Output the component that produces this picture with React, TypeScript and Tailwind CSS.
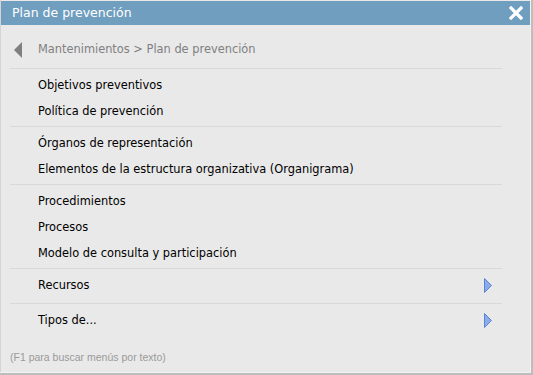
import React from "react";

const Sep = () => <div className="mt-[2px] mb-[3px] h-px bg-[#d9d9d9] mx-[10px] w-[492px]" />;

const Item = ({ label, arrow, extra }: { label: string; arrow?: boolean; extra?: boolean }) => (
  <div className={`h-[26px] flex items-center pl-[38px] pr-[10px] w-[502px] text-[#000] justify-between ${extra ? "mb-[3px]" : ""}`}>
    <span className="pt-[2px]">{label}</span>
    {arrow && (
      <svg width="8" height="15" viewBox="0 0 8 15">
        <polygon points="0.5,0.5 7.5,7.5 0.5,14.5" fill="#8aaceb" stroke="#5b84d6" strokeWidth="1" />
      </svg>
    )}
  </div>
);

export default function App() {
  return (
    <div className="w-[533px] h-[375px] bg-[#e9e9e9] flex flex-col relative overflow-hidden" style={{ fontFamily: "'DejaVu Sans', Verdana, sans-serif" }}>
      <div className="absolute left-0 top-0 w-px h-full bg-[#d4d4d4]" />
      <div className="absolute right-0 top-0 w-[2px] h-full bg-[#bdbdbd]" />
      <div className="absolute right-[2px] top-0 w-px h-full bg-[#f2f2f2]" />
      <div className="absolute left-0 bottom-0 h-[2px] w-full bg-[#bdbdbd]" />
      <div className="absolute left-0 bottom-[2px] h-px w-[530px] bg-[#f2f2f2]" />
      <div className="mt-px ml-px w-[529px] h-[24px] bg-[#6f9ebf] flex items-center justify-between pl-[11px] pr-[7px]">
        <span className="text-white text-[12.5px]">Plan de prevención</span>
        <svg width="14" height="14" viewBox="0 0 14 14">
          <path d="M2 2 L12 12 M12 2 L2 12" stroke="white" strokeWidth="3.2" strokeLinecap="square" />
        </svg>
      </div>
      <div className="text-[11.4px] flex flex-col">
        <div className="h-[32px] mt-[9px] flex items-center">
          <svg width="9" height="16" viewBox="0 0 9 16" className="ml-[14px] mr-[15px]">
            <polygon points="8,0 8,16 0,8" fill="#7f7f7f" />
          </svg>
          <span className="text-[#808080]">Mantenimientos &gt; Plan de prevención</span>
        </div>
        <Sep />
        <Item label="Objetivos preventivos" />
        <Item label="Política de prevención" />
        <Sep />
        <Item label="Órganos de representación" />
        <Item label="Elementos de la estructura organizativa (Organigrama)" />
        <Sep />
        <Item label="Procedimientos" />
        <Item label="Procesos" />
        <Item label="Modelo de consulta y participación" />
        <Sep />
        <Item label="Recursos" arrow extra />
        <Sep />
        <Item label="Tipos de..." arrow />
        <div className="mt-[17px] pl-[10px] text-[#9a9a9a] text-[10.5px]" style={{ fontFamily: "'Liberation Sans', Arial, sans-serif" }}>
          (F1 para buscar menús por texto)
        </div>
      </div>
    </div>
  );
}
